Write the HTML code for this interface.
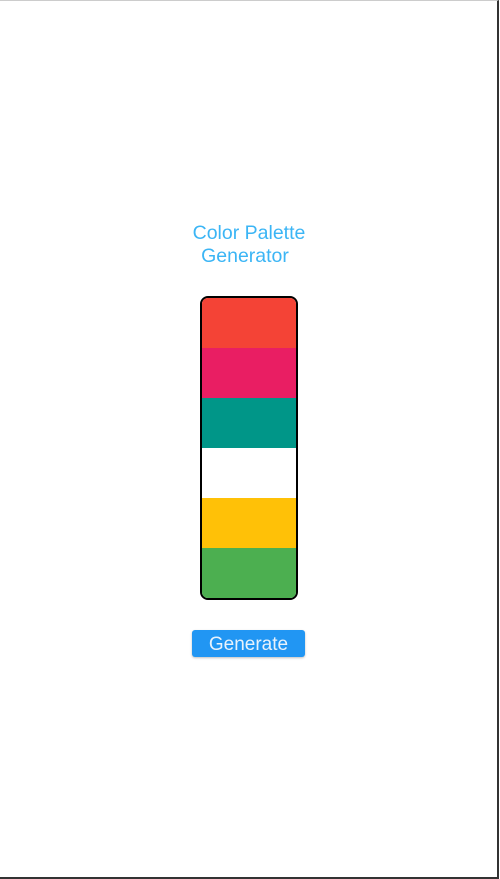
<!DOCTYPE html>
<html><head><style>
html,body{margin:0;padding:0;background:#fff;}
body{width:500px;height:879px;position:relative;overflow:hidden;font-family:"Liberation Sans",Arial,sans-serif;}
.frame{position:absolute;left:0;top:0;width:497px;height:876px;border-right:2px solid #333;border-bottom:2px solid #333;border-top:1px solid #ccc;}
.title{position:absolute;left:149px;width:200px;top:222px;text-align:center;color:#3bb5f5;font-size:19.5px;line-height:23px;}
.box{position:absolute;left:200px;top:296px;width:94px;height:300px;border:2px solid #000;border-radius:8px;overflow:hidden;}
.box div{height:50px;}
.btn{position:absolute;left:192px;top:630px;width:113px;height:27px;background:#2196f3;border-radius:3px;color:#e8f2fc;font-size:19px;line-height:30px;text-align:center;box-shadow:0 1px 2px rgba(0,0,0,.25);}
</style></head><body>
<div class="frame"></div>
<div class="title">Color Palette<br><span style="position:relative;left:-4px">Generator</span></div>
<div class="box">
<div style="background:#f44336"></div>
<div style="background:#e91e63"></div>
<div style="background:#009688"></div>
<div style="background:#fff"></div>
<div style="background:#ffc107"></div>
<div style="background:#4caf50"></div>
</div>
<div class="btn">Generate</div>
</body></html>
